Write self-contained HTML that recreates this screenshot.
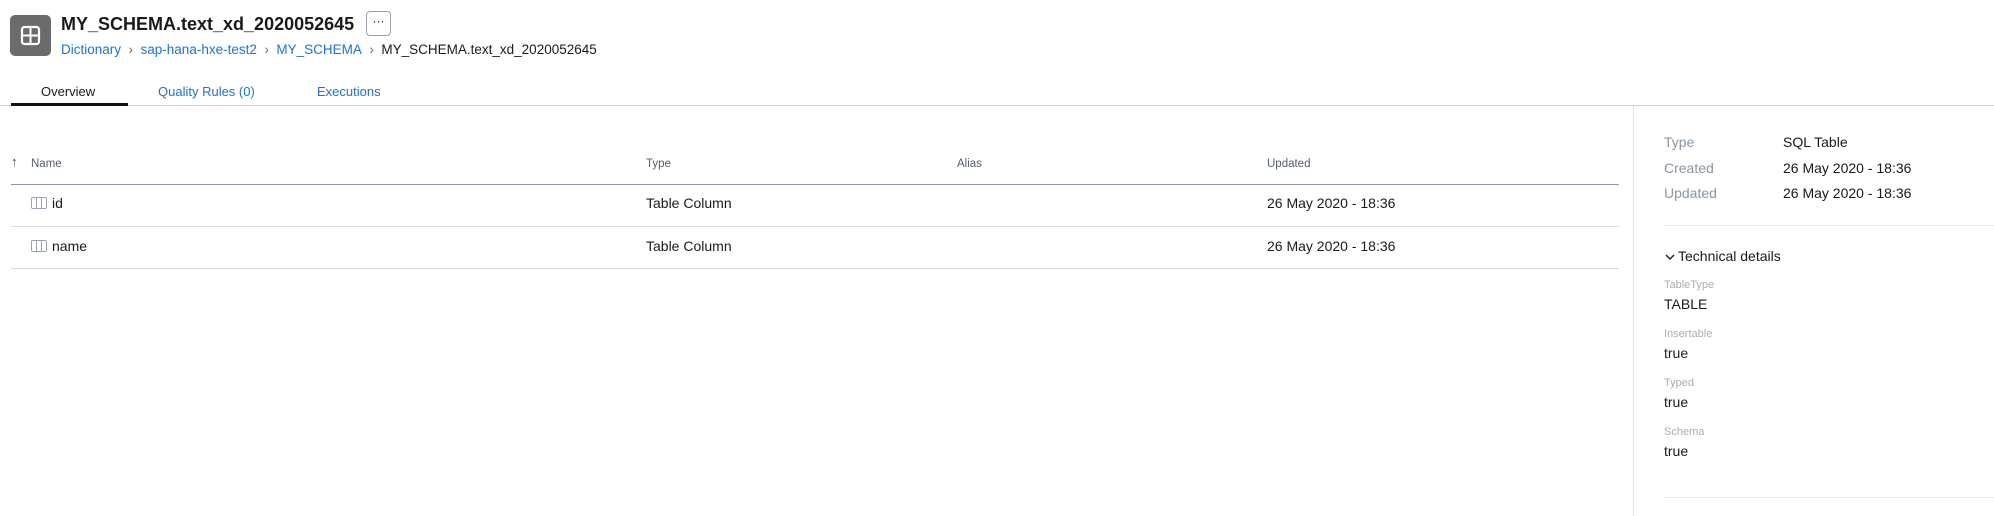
<!DOCTYPE html>
<html><head><meta charset="utf-8"><style>
*{margin:0;padding:0;box-sizing:border-box}
body{width:1994px;height:516px;background:#fff;font-family:"Liberation Sans",sans-serif;color:#1a1a1a;position:relative;overflow:hidden}
.a{position:absolute;white-space:nowrap}
.blue{color:#1a73d9}
.lbl{color:#8a96a3}
.h{font-size:11.5px;color:#56606b}
.line{position:absolute;height:1px}
</style></head><body>
<div class="a" style="left:10px;top:15px;width:41px;height:41px;background:#6b6b6b;border-radius:5px">
<svg width="41" height="41" viewBox="0 0 41 41"><rect x="12" y="12" width="17" height="17" rx="2.5" fill="none" stroke="#fff" stroke-width="2.2"/><line x1="20.5" y1="12" x2="20.5" y2="29" stroke="#fff" stroke-width="2"/><line x1="12" y1="20.5" x2="29" y2="20.5" stroke="#fff" stroke-width="2"/></svg></div>
<div class="a" style="left:61px;top:12px;font-size:18px;font-weight:bold;line-height:24px">MY_SCHEMA.text_xd_2020052645</div>
<div class="a" style="left:366px;top:11px;width:25px;height:25px;border:1px solid #9aa3ad;border-radius:4px;font-size:12px;text-align:center;line-height:18px">···</div>
<div class="a" style="left:61px;top:41px;font-size:13.5px;line-height:18px"><span class="blue">Dictionary</span><span style="color:#666">&nbsp;&nbsp;›&nbsp;&nbsp;</span><span class="blue">sap-hana-hxe-test2</span><span style="color:#666">&nbsp;&nbsp;›&nbsp;&nbsp;</span><span class="blue">MY_SCHEMA</span><span style="color:#666">&nbsp;&nbsp;›&nbsp;&nbsp;</span>MY_SCHEMA.text_xd_2020052645</div>
<div class="a" style="left:41px;top:84px;font-size:13px">Overview</div>
<div class="a blue" style="left:158px;top:84px;font-size:13px">Quality Rules (0)</div>
<div class="a blue" style="left:317px;top:84px;font-size:13px">Executions</div>
<div class="line" style="left:0;top:105px;width:1994px;background:#cfd3d7"></div>
<div class="a" style="left:11px;top:103px;width:117px;height:3px;background:#111"></div>
<div class="a" style="left:1633px;top:106px;width:1px;height:410px;background:#e3e5e8"></div>
<div class="a" style="left:11px;top:154px;font-size:13px;color:#444">↑</div>
<div class="a h" style="left:31px;top:158px">Name</div>
<div class="a h" style="left:646px;top:158px">Type</div>
<div class="a h" style="left:957px;top:158px">Alias</div>
<div class="a h" style="left:1267px;top:158px">Updated</div>
<div class="line" style="left:11px;top:184px;width:1608px;background:#8a96a3"></div>
<svg class="a" style="left:31px;top:197px" width="16" height="12"><rect x="0.5" y="0.5" width="15" height="11" rx="1.5" fill="none" stroke="#9aa3ad"/><line x1="5.5" y1="1" x2="5.5" y2="11" stroke="#9aa3ad"/><line x1="10.5" y1="1" x2="10.5" y2="11" stroke="#9aa3ad"/></svg>
<div class="a" style="left:52px;top:195px;font-size:14px">id</div>
<div class="a" style="left:646px;top:195px;font-size:14px">Table Column</div>
<div class="a" style="left:1267px;top:195px;font-size:14px">26 May 2020 - 18:36</div>
<div class="line" style="left:11px;top:226px;width:1608px;background:#d5dbe1"></div>
<svg class="a" style="left:31px;top:240px" width="16" height="12"><rect x="0.5" y="0.5" width="15" height="11" rx="1.5" fill="none" stroke="#9aa3ad"/><line x1="5.5" y1="1" x2="5.5" y2="11" stroke="#9aa3ad"/><line x1="10.5" y1="1" x2="10.5" y2="11" stroke="#9aa3ad"/></svg>
<div class="a" style="left:52px;top:238px;font-size:14px">name</div>
<div class="a" style="left:646px;top:238px;font-size:14px">Table Column</div>
<div class="a" style="left:1267px;top:238px;font-size:14px">26 May 2020 - 18:36</div>
<div class="line" style="left:11px;top:268px;width:1608px;background:#d5dbe1"></div>
<div class="a lbl" style="left:1664px;top:134px;font-size:14px">Type</div>
<div class="a" style="left:1783px;top:134px;font-size:14px">SQL Table</div>
<div class="a lbl" style="left:1664px;top:160px;font-size:14px">Created</div>
<div class="a" style="left:1783px;top:160px;font-size:14px">26 May 2020 - 18:36</div>
<div class="a lbl" style="left:1664px;top:185px;font-size:14px">Updated</div>
<div class="a" style="left:1783px;top:185px;font-size:14px">26 May 2020 - 18:36</div>
<div class="line" style="left:1664px;top:225px;width:330px;background:#e6e8eb"></div>
<svg class="a" style="left:1665px;top:253px" width="10" height="8"><path d="M1 2 L5 6 L9 2" fill="none" stroke="#222" stroke-width="1.5"/></svg>
<div class="a" style="left:1678px;top:248px;font-size:14px">Technical details</div>
<div class="a lbl" style="left:1664px;top:279px;font-size:11px;color:#a7aeb5">TableType</div>
<div class="a" style="left:1664px;top:296px;font-size:14px">TABLE</div>
<div class="a lbl" style="left:1664px;top:328px;font-size:11px;color:#a7aeb5">Insertable</div>
<div class="a" style="left:1664px;top:345px;font-size:14px">true</div>
<div class="a lbl" style="left:1664px;top:377px;font-size:11px;color:#a7aeb5">Typed</div>
<div class="a" style="left:1664px;top:394px;font-size:14px">true</div>
<div class="a lbl" style="left:1664px;top:426px;font-size:11px;color:#a7aeb5">Schema</div>
<div class="a" style="left:1664px;top:443px;font-size:14px">true</div>
<div class="line" style="left:1664px;top:497px;width:330px;background:#e6e8eb"></div>
</body></html>
